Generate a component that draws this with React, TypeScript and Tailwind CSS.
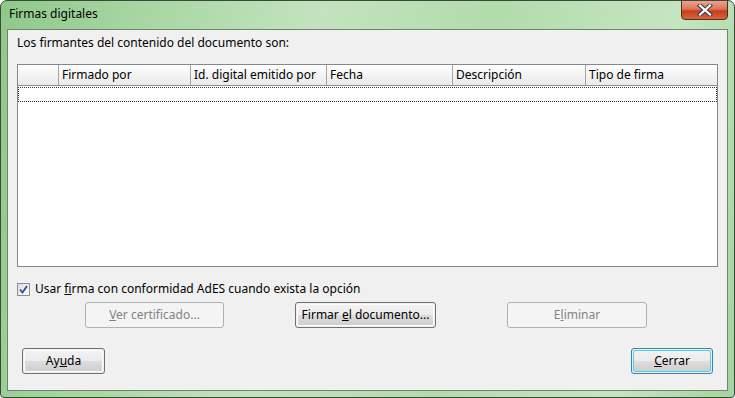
import React from "react";

const cols = [
  { w: 41, label: "" },
  { w: 132, label: "Firmado por" },
  { w: 136, label: "Id. digital emitido por" },
  { w: 126, label: "Fecha" },
  { w: 133, label: "Descripción" },
  { w: 131, label: "Tipo de firma" },
];

function Btn({ children, w, disabled, def }: { children: React.ReactNode; w: string; disabled?: boolean; def?: boolean }) {
  if (disabled) {
    return (
      <div className={`${w} h-[26px] rounded-[3px] border border-[#adb2b5] bg-[#f4f4f4] flex items-center justify-center text-[#838383]`}>
        {children}
      </div>
    );
  }
  return (
    <div className={`${w} h-[26px] rounded-[3px] border ${def ? "border-[#3c7fb1]" : "border-[#707070]"} p-px`}>
      <div
        className={`w-full h-full rounded-[2px] flex items-center justify-center text-black ${def ? "border border-[#48d0f7]" : "border border-[#fcfcfc]"} bg-[linear-gradient(to_bottom,#f2f2f2_0%,#ebebeb_48%,#dddddd_52%,#cfcfcf_100%)]`}
      >
        {children}
      </div>
    </div>
  );
}

export default function App() {
  return (
    <div
      className="w-[735px] h-[398px] rounded-t-[7px] rounded-b-[4px] border border-[#3a4a3a] bg-[linear-gradient(100deg,#8fc98a_0%,#a8d6a3_18%,#c3e3be_40%,#b2dbac_62%,#c6e5c1_85%,#a4d49f_100%)] flex flex-col text-[12px] overflow-hidden"
      style={{ fontFamily: '"Noto Sans", "Open Sans", sans-serif' }}
    >
      {/* title bar */}
      <div className="h-[28px] flex items-start justify-between pl-[8px] pr-[6px] shrink-0">
        <span className="mt-[5px] text-black leading-[16px]">Firmas digitales</span>
        <div className="-mt-px w-[47px] h-[20px] rounded-b-[4px] border border-[#5a2a1e] bg-[linear-gradient(to_bottom,#eaa58e_0%,#dc7558_45%,#c73e1c_55%,#d6663a_100%)] flex items-center justify-center">
          <svg width="16" height="12" viewBox="0 0 16 12">
            <path d="M3 1.5 L13 10.5 M13 1.5 L3 10.5" stroke="#3b3b4b" strokeWidth="4.2" strokeLinecap="square" />
            <path d="M3 1.5 L13 10.5 M13 1.5 L3 10.5" stroke="#ffffff" strokeWidth="2.2" strokeLinecap="square" />
          </svg>
        </div>
      </div>

      {/* client */}
      <div className="mx-[6px] mb-[6px] flex-1 border border-[#6f846d] bg-[#f0f0f0] flex flex-col pl-[9px] pr-[8px]">
        <div className="mt-[5px] h-[16px] leading-[16px] text-black">Los firmantes del contenido del documento son:</div>

        <div className="mt-[13px] h-[203px] w-[701px] border border-[#828790] bg-white flex flex-col">
          <div className="h-[21px] flex bg-[linear-gradient(to_bottom,#ffffff_0%,#f3f3f3_50%,#ebebeb_100%)] border-b border-[#8e8f8f]">
            {cols.map((c, i) => (
              <div
                key={i}
                className={`h-full flex items-center pl-[3px] text-black ${i < cols.length - 1 ? "border-r border-[#a5a5a5]" : ""}`}
                style={{ width: c.w }}
              >
                {c.label}
              </div>
            ))}
          </div>
          <div className="mt-px h-[15px] border border-dotted border-[#333333]" />
        </div>

        <div className="mt-[12px] h-[20px] flex items-center gap-[5px] text-black">
          <div className="w-[13px] h-[13px] border border-[#8f8f8f] bg-[linear-gradient(135deg,#dcdcdc,#ffffff)] flex items-center justify-center">
            <svg width="9" height="9" viewBox="0 0 9 9">
              <path d="M1 4.5 L3.5 7.5 L8 1" stroke="#2a4ea3" strokeWidth="1.8" fill="none" />
            </svg>
          </div>
          <span>
            Usar <u>f</u>irma con conformidad AdES cuando exista la opción
          </span>
        </div>

        <div className="mt-[3px] flex pl-[68px] gap-[71px]">
          <Btn w="w-[139px]" disabled>
            <span><u>V</u>er certificado...</span>
          </Btn>
          <Btn w="w-[141px]">
            <span>Firmar <u>e</u>l documento...</span>
          </Btn>
          <Btn w="w-[140px]" disabled>
            <span>E<u>l</u>iminar</span>
          </Btn>
        </div>

        <div className="mt-[20px] flex justify-between pl-[5px] pr-[6px]">
          <Btn w="w-[83px]">
            <span>Ay<u>u</u>da</span>
          </Btn>
          <Btn w="w-[82px]" def>
            <span><u>C</u>errar</span>
          </Btn>
        </div>
      </div>
    </div>
  );
}
